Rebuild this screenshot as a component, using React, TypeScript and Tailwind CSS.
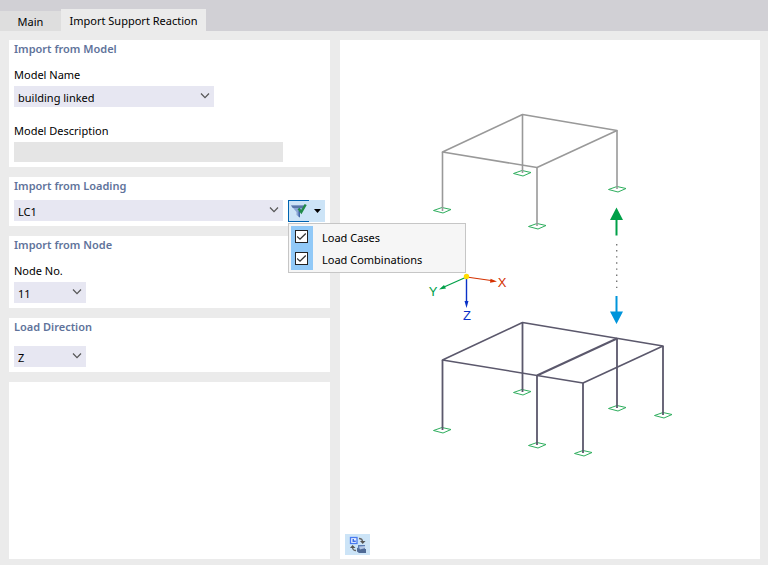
import type { ReactNode } from 'react';

const loadTypes = ['Load Cases', 'Load Combinations'];

const Panel = ({ title, children }: { title: string; children: ReactNode }) => {
  return (
    <section className="bg-white px-[5px] pb-[5px]">
      <h2 className="h-[18px] font-semibold leading-[18px] text-[#5f739b]">{title}</h2>
      {children}
    </section>
  );
};

const Chevron = () => (
  <svg
    className="pointer-events-none absolute right-1 top-[6px] h-2 w-[10px]"
    viewBox="0 0 10 8"
    fill="none"
    stroke="#555"
    strokeWidth="1.2"
  >
    <path d="M1 1.5L5 5.7L9 1.5" />
  </svg>
);

interface ComboProps {
  id: string;
  value: string;
  className: string;
  label?: string;
}

const Combo = ({ id, value, className, label }: ComboProps) => {
  return (
    <div className={`relative ${className}`}>
      <select
        id={id}
        aria-label={label}
        defaultValue={value}
        className="block h-[21px] w-full appearance-none bg-[#e7e7f2] px-1 pt-[2px] leading-4 text-black outline-none"
      >
        <option>{value}</option>
      </select>
      <Chevron />
    </div>
  );
};

const FilterMenu = () => {
  return (
    <div className="relative flex h-[22px] w-[37px]">
      <button
        type="button"
        aria-label="Filter loading"
        className="flex w-[21px] items-center justify-center border-y border-l border-[#0063b1] bg-[#cce4f7]"
      >
        <svg className="h-4 w-4" viewBox="0 0 16 16">
          <path d="M0 2.500h13.500L9 9V14.500L5.500 12V9Z" fill="#8aa5d6" />
          <path d="M0 2.500h13.500L12 5H1.800Z" fill="#5877a8" />
          <path d="M7.500 8h1.500v6.500L7.500 13.500Z" fill="#3f66a6" />
          <path d="M7.500 5.500L10.300 9.200L14.700 1.500" fill="none" stroke="#1f8a48" strokeWidth="2.400" />
        </svg>
      </button>
      <button
        type="button"
        aria-label="Show load types"
        aria-expanded="true"
        className="flex w-4 items-center justify-center bg-[#cce4f7]"
      >
        <svg className="h-1 w-[7px]" viewBox="0 0 7 4">
          <path d="M0 0h7L3.500 4Z" fill="#000" />
        </svg>
      </button>
      <div className="absolute left-0 top-[23px] z-10 w-[178px] border border-[#c6c6c6] bg-[#f6f6f6] p-[2px]">
        {loadTypes.map((type) => (
          <label key={type} className="flex h-[22px] items-center">
            <span className="relative flex h-full w-[22px] items-start bg-[#91c9f7] pl-1 pt-1">
              <input
                type="checkbox"
                defaultChecked
                className="peer h-[13px] w-[13px] appearance-none border border-[#222] bg-white"
              />
              <svg
                className="pointer-events-none invisible absolute left-[6px] top-[6px] h-[9px] w-[9px] peer-checked:visible"
                viewBox="0 0 9 9"
                fill="none"
                stroke="#333"
                strokeWidth="1.300"
              >
                <path d="M0 4.500L3 7.200L8.800 1.500" />
              </svg>
            </span>
            <span className="pl-[9px] pt-[2px]">{type}</span>
          </label>
        ))}
      </div>
    </div>
  );
};

const upperSupports = [[102, 170], [182, 133], [277, 149], [197, 186]];
const lowerSupports = [[102, 390], [182, 352], [277, 368], [197, 405], [243, 413], [323, 375]];

const Support = ({ x, y }: { x: number; y: number }) => (
  <path
    d={`M${x - 8.5} ${y + 0.5}L${x} ${y - 2.5}L${x + 9} ${y - 0.5}L${x + 1} ${y + 3}Z`}
    fill="none"
    stroke="#2fae5e"
  />
);

const StructureDrawing = () => {
  return (
    <svg className="w-full" viewBox="0 0 420 480" role="img" aria-label="Linked building models">
      {[...upperSupports, ...lowerSupports].map(([x, y]) => (
        <Support key={`${x}-${y}`} x={x} y={y} />
      ))}
      <g fill="none" stroke="#999" strokeWidth="1.600" strokeLinejoin="round">
        <path d="M102.500 112L182.500 74.500L277 90.500L197 127.500Z" />
        <path d="M102.500 112V171M182.500 74.500V133M277 90.500V149M197 127.500V186" />
      </g>
      <g fill="none" stroke="#5b586c" strokeWidth="1.600" strokeLinejoin="round">
        <path d="M102.500 320L182.500 282.500L323 306L243 343Z" />
        <path d="M277 298.500L197 335.500" strokeWidth="2" />
        <path
          d="M102.500 320V390M182.500 282.500V352M277 298.500V368M197 335.500V405M243 343V413M323 306V375"
          strokeWidth="1.800"
        />
      </g>

      {/* link between the two models */}
      <path d="M276.500 167.500l6.500 12.500h-5.500v15.500h-2v-15.500h-5.500Z" fill="#00a048" />
      <path d="M276.700 204v44" stroke="#777" strokeWidth="1.400" strokeDasharray="1.400 4.700" />
      <path d="M276.500 284l6.500-12.500h-5.500v-15.500h-2v15.500h-5.500Z" fill="#0095db" />

      {/* axes */}
      <path d="M126.500 237L104 247" stroke="#00a048" strokeWidth="1.200" />
      <path d="M99 249.500l5-4.500 2 3.500Z" fill="#00a048" />
      <path d="M126.500 237L151 240.500" stroke="#d43100" strokeWidth="1.200" />
      <path d="M157 241.500l-7 1.300.500-4Z" fill="#d43100" />
      <path d="M126.500 237V262" stroke="#0a32c8" strokeWidth="1.400" />
      <path d="M126.500 268l-2-7h4Z" fill="#0a32c8" />
      <circle cx="126.500" cy="236.500" r="2.700" fill="#ffdc00" />
      <g fontFamily="Liberation Sans, sans-serif" fontSize="13" textAnchor="middle">
        <text x="93" y="256" fill="#00a048">Y</text>
        <text x="162" y="247" fill="#d43100">X</text>
        <text x="127" y="280" fill="#0a32c8">Z</text>
      </g>
    </svg>
  );
};

const App = () => {
  return (
    <div className="flex min-h-screen flex-col bg-[#ebebeb] font-['Noto_Sans',sans-serif] text-[11px] leading-4 text-black">
      <nav className="flex h-[31px] items-end bg-[#d1d0d5]" role="tablist">
        <button type="button" role="tab" aria-selected="false" className="h-5 w-[61px] bg-[#dedede] pt-[2px]">
          Main
        </button>
        <button type="button" role="tab" aria-selected="true" className="h-[22px] w-[145px] bg-[#ebebeb] pt-[2px]">
          Import Support Reaction
        </button>
      </nav>

      <main className="flex flex-1 gap-[10px] px-2 pb-[6px] pl-[9px] pt-[9px]">
        <div className="flex w-[321px] shrink-0 flex-col gap-[10px]">
          <Panel title="Import from Model">
            <label htmlFor="model-name" className="mb-[3px] mt-[9px] block">Model Name</label>
            <Combo id="model-name" value="building linked" className="w-[200px]" />
            <label htmlFor="model-description" className="mb-[3px] mt-4 block">Model Description</label>
            <input id="model-description" readOnly className="block h-5 w-[269px] bg-[#e5e5e5] px-1 outline-none" />
          </Panel>

          <Panel title="Import from Loading">
            <div className="mt-[5px] flex h-[21px] gap-[5px]">
              <Combo id="loading" label="Import from Loading" value="LC1" className="flex-1" />
              <FilterMenu />
            </div>
          </Panel>

          <Panel title="Import from Node">
            <label htmlFor="node-no" className="mb-[3px] mt-[9px] block">Node No.</label>
            <Combo id="node-no" value="11" className="w-[72px]" />
          </Panel>

          <Panel title="Load Direction">
            <Combo id="load-direction" label="Load Direction" value="Z" className="mt-[10px] w-[72px]" />
          </Panel>

          <div className="flex-1 bg-white" />
        </div>

        <section className="flex flex-1 flex-col bg-white">
          <StructureDrawing />
          <button
            type="button"
            aria-label="Switch picture"
            className="mb-1 ml-[5px] mt-auto flex h-[21px] w-[25px] items-center justify-center bg-[#cce4f7]"
          >
            <svg className="h-[18px] w-[18px]" viewBox="0 0 18 18">
              <rect x="1.500" y="1.500" width="6.500" height="6" fill="#e8f0ff" stroke="#4a7bf0" strokeWidth="1.300" />
              <path d="M3.500 3h1.500v1.500h1.800V6H3.500Z" fill="#3f6fe8" />
              <path d="M10 2.500c2.500 0 3.500 1.200 3.500 3.500" fill="none" stroke="#666" strokeWidth="1.300" />
              <path d="M11 5h5.500l-2.800 3Z" fill="#555" />
              <path d="M7 14.500c-3 0-3.500-1.200-3.500-3.500" fill="none" stroke="#666" strokeWidth="1.300" />
              <path d="M1 12h5.500L3.500 9Z" fill="#555" />
              <path d="M9 9h7v4h-7Z" fill="#5c7eb5" />
              <path d="M8 11.500L10 13h7v4h-7L8 15.500Z" fill="#4f6a96" />
              <path d="M10 10.500l6-.500v2l-5 1.500Z" fill="#b5c8e6" />
            </svg>
          </button>
        </section>
      </main>
    </div>
  );
};

export default App;
